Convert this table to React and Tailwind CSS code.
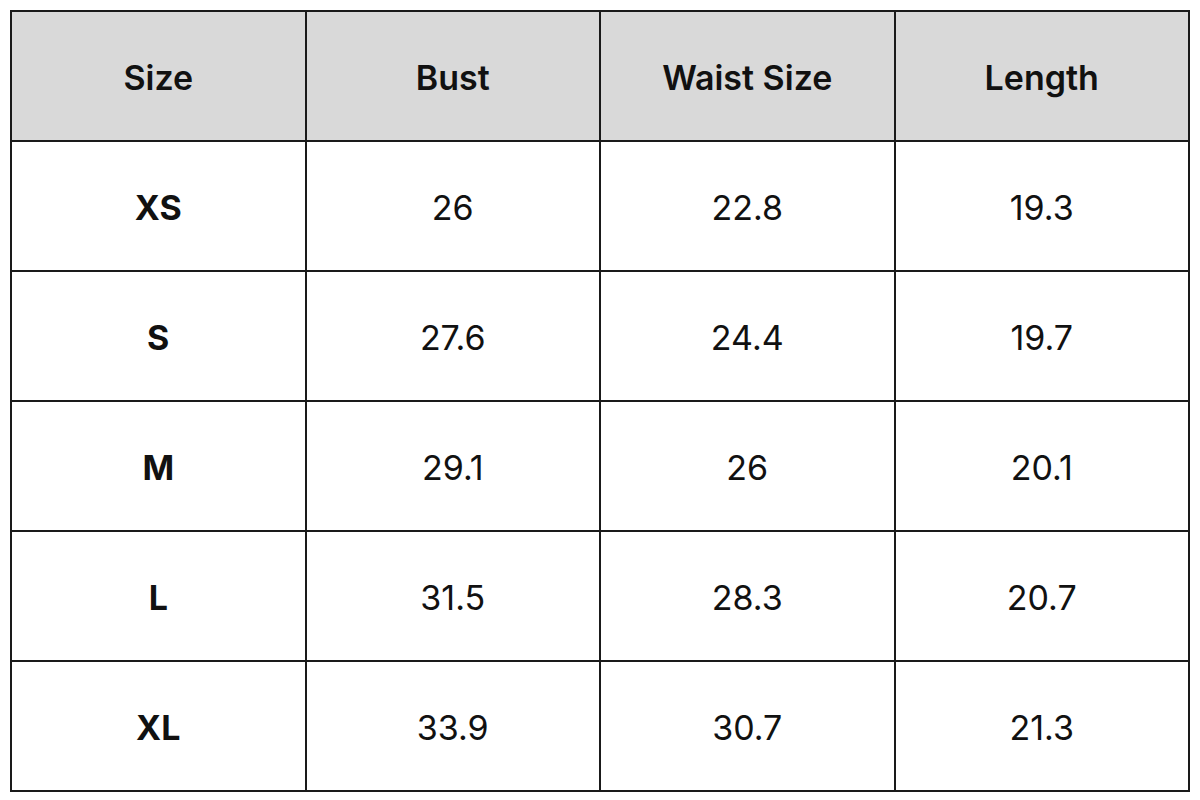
const HEAD = ["Size", "Bust", "Waist Size", "Length"];

const ROWS = [
  ["XS", "26", "22.8", "19.3"],
  ["S", "27.6", "24.4", "19.7"],
  ["M", "29.1", "26", "20.1"],
  ["L", "31.5", "28.3", "20.7"],
  ["XL", "33.9", "30.7", "21.3"],
];

export default function App() {
  return (
    <div className="bg-white w-[1200px] h-[800px] pt-[10px] pl-[10px] font-['Inter','Open_Sans',sans-serif] text-[#111]">
      <table className="w-[1180px] border-collapse table-fixed">
        <thead>
          <tr className="bg-[#d9d9d9] h-[130px]">
            {HEAD.map((h) => (
              <th
                key={h}
                className="border-2 border-[#1a1a1a] text-[34px] font-semibold text-center align-middle pt-[3px]"
              >
                {h}
              </th>
            ))}
          </tr>
        </thead>
        <tbody>
          {ROWS.map((r) => (
            <tr key={r[0]} className="h-[130px]">
              {r.map((v, i) => (
                <td
                  key={i}
                  className={`border-2 border-[#1a1a1a] text-[34px] text-center align-middle pt-[3px] ${
                    i === 0 ? "font-bold" : "font-normal"
                  }`}
                >
                  {v}
                </td>
              ))}
            </tr>
          ))}
        </tbody>
      </table>
    </div>
  );
}
